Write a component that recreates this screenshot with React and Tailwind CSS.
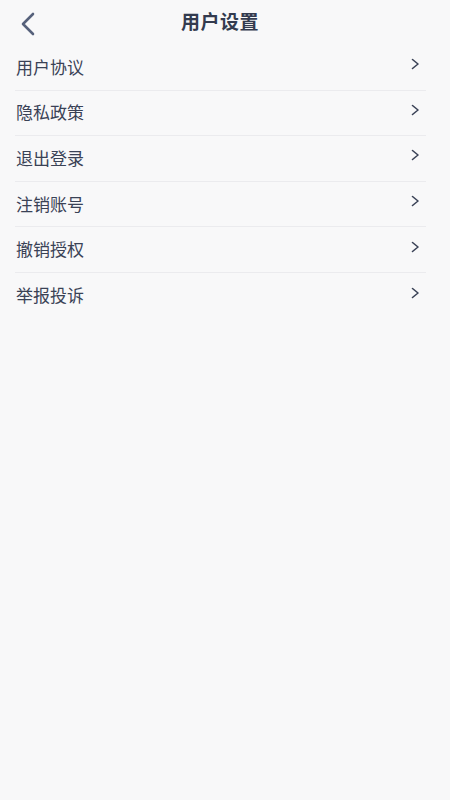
const items = ['用户协议', '隐私政策', '退出登录', '注销账号', '撤销授权', '举报投诉'];

function Chevron() {
  return (
    <svg width="9" height="12" viewBox="0 0 9 12" fill="none">
      <path d="M1.5 1.5 L7 6 L1.5 10.5" stroke="#3b4357" strokeWidth="1.6" strokeLinecap="round" strokeLinejoin="round" />
    </svg>
  );
}

export default function App() {
  return (
    <div
      className="w-[450px] h-[800px] bg-[#f8f8f9] text-[#3a4256]"
      style={{ fontFamily: '"Noto Sans CJK SC", "Noto Sans", sans-serif' }}
    >
      {/* Header */}
      <div className="relative h-[45px] flex items-center justify-center">
        <button className="absolute left-[18px] top-[11px]">
          <svg width="20" height="26" viewBox="0 0 20 26" fill="none">
            <path d="M15 3 L5 13 L15 23" stroke="#56617b" strokeWidth="2.6" strokeLinecap="round" strokeLinejoin="round" />
          </svg>
        </button>
        <h1 className="text-[19px] font-bold text-[#333b4f] leading-none -mt-[4px] -ml-[10px] tracking-[0.5px]">用户设置</h1>
      </div>

      {/* List */}
      <div className="ml-[15px] w-[411px]">
        {items.map((item, i) => (
          <div
            key={item}
            className={`h-[45.6px] flex items-center justify-between pl-px pr-[6px] ${i < items.length - 1 ? 'border-b border-[#ebebee]' : ''}`}
          >
            <span className="text-[17px] leading-none -mt-[2px]">{item}</span>
            <span className="-mt-[6px]">
              <Chevron />
            </span>
          </div>
        ))}
      </div>
    </div>
  );
}
